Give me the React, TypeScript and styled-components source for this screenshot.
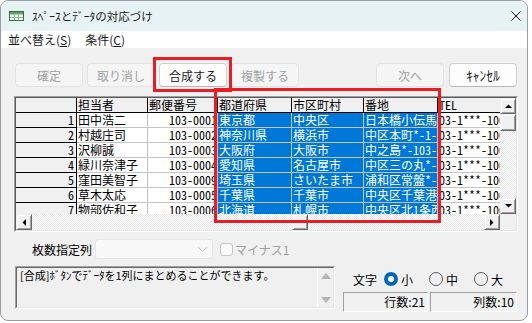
import React from "react";
import styled, { createGlobalStyle } from "styled-components";

const UI_FONT = `"Noto Sans CJK JP", "Noto Sans", sans-serif`;
const GRID_FONT = `"Noto Sans Mono CJK JP", "Noto Sans CJK JP", monospace`;

const GlobalStyle = createGlobalStyle`
  html, body {
    margin: 0;
    padding: 0;
    background: #ffffff;
  }
  body {
    font-family: ${UI_FONT};
  }
`;

const Window = styled.div`
  position: relative;
  width: 528px;
  height: 321px;
  box-sizing: border-box;
  border: 1px solid #9a9fa3;
  border-radius: 8px;
  overflow: hidden;
  background: #f0f0f0;
  display: flex;
  flex-direction: column;
  font-family: ${UI_FONT};
  color: #000;
`;

const TitleBar = styled.div`
  height: 30px;
  flex: none;
  display: flex;
  align-items: center;
  padding: 0 6px 0 8px;
  background: #e6f2f4;
`;

const TitleText = styled.span`
  margin-left: 8px;
  font-size: 11.5px;
  color: #1a1a1a;
`;

const CloseBox = styled.div`
  margin-left: auto;
  width: 10px;
  height: 10px;
  display: flex;
`;

const MenuBar = styled.div`
  height: 17px;
  flex: none;
  display: flex;
  align-items: center;
  gap: 14px;
  padding-left: 7px;
  background: #ffffff;
  font-size: 12px;
  color: #1a1a1a;

  u {
    text-underline-offset: 1px;
  }
`;

const MenuItem = styled.span`
  line-height: 17px;
`;

const Body = styled.div`
  flex: 1;
  display: flex;
  flex-direction: column;
  padding: 15px 10px 0 13px;
`;

const ButtonRow = styled.div`
  display: flex;
  gap: 4px;
  height: 24px;
  padding-left: 1px;
`;

const Btn = styled.button<{ $push?: number; $kana?: boolean }>`
  width: 68px;
  height: 24px;
  box-sizing: border-box;
  margin: 0 0 0 ${(p) => p.$push ?? 0}px;
  padding: 0;
  border: 1px solid #d0d0d0;
  border-bottom-color: #b8b8b8;
  border-radius: 4px;
  background: #fdfdfd;
  font-family: ${UI_FONT};
  font-size: ${(p) => (p.$kana ? 13.5 : 12)}px;
  color: #1a1a1a;

  &:disabled {
    background: #f5f5f5;
    border-color: #e3e3e3;
    color: #a2a2a2;
  }
`;

const Spacer = styled.div`
  flex: 1;
`;

const Highlight = styled.div`
  position: relative;
  display: flex;

  &::after {
    content: "";
    position: absolute;
    left: -6px;
    top: -6px;
    right: -5px;
    bottom: -5px;
    border: 3px solid #ea1c24;
    pointer-events: none;
  }
`;

const GridFrame = styled.div`
  position: relative;
  margin-top: 9px;
  width: 504px;
  height: 136px;
  box-sizing: border-box;
  border: 1px solid;
  border-color: #a0a0a0 #ffffff #ffffff #a0a0a0;
`;

const GridInner = styled.div`
  height: 100%;
  box-sizing: border-box;
  border: 1px solid;
  border-color: #5a5a5a #e3e3e3 #e3e3e3 #5a5a5a;
  display: grid;
  grid-template-columns: 1fr 16px;
  grid-template-rows: 1fr 16px;
`;

const ColumnMark = styled.div`
  position: absolute;
  left: 199px;
  top: -9px;
  width: 227px;
  height: 135px;
  box-sizing: border-box;
  border: 3px solid #ea1c24;
  pointer-events: none;
`;

const Sheet = styled.div`
  overflow: hidden;
  background: #ffffff;
  display: grid;
  grid-template-columns: 61px 71px 70px 74px 72px 74px 90px;
  grid-auto-rows: 15px;
  align-content: start;
  font-family: ${GRID_FONT};
  font-size: 12px;
  line-height: 14px;
`;

const BaseCell = styled.div`
  box-sizing: border-box;
  white-space: nowrap;
  overflow: hidden;
  border-right: 1px solid #c4c4c4;
  border-bottom: 1px solid #c4c4c4;
  padding: 0 1px;
`;

const HeadCell = styled(BaseCell)`
  background: #f0f0f0;
  border-color: #000;
`;

const RowHeadCell = styled(BaseCell)`
  background: #f0f0f0;
  border-color: #000;
  text-align: right;
  padding-right: 2px;
`;

const DataCell = styled(BaseCell)<{ $selected?: boolean; $right?: boolean }>`
  background: ${(p) => (p.$selected ? "#0078d7" : "#ffffff")};
  color: ${(p) => (p.$selected ? "#ffffff" : "#000000")};
  text-align: ${(p) => (p.$right ? "right" : "left")};
  padding: ${(p) => (p.$right ? "0" : "0 1px")};
`;

const VScroll = styled.div`
  display: flex;
  flex-direction: column;
`;

const HScroll = styled.div`
  display: flex;
`;

const ScrollCorner = styled.div`
  background: #f0f0f0;
`;

const ScrollBtn = styled.div`
  flex: none;
  width: 16px;
  height: 16px;
  box-sizing: border-box;
  background: #f0f0f0;
  border: 1px solid;
  border-color: #f0f0f0 #696969 #696969 #f0f0f0;
  box-shadow: inset 1px 1px #ffffff, inset -1px -1px #a0a0a0;
  display: flex;
  align-items: center;
  justify-content: center;
`;

const Thumb = styled(ScrollBtn)<{ $offset: number; $vertical?: boolean }>`
  margin: ${(p) => (p.$vertical ? `${p.$offset}px 0 0 0` : `0 0 0 ${p.$offset}px`)};
  height: ${(p) => (p.$vertical ? 17 : 16)}px;
`;

const Track = styled.div<{ $vertical?: boolean }>`
  flex: 1;
  display: flex;
  flex-direction: ${(p) => (p.$vertical ? "column" : "row")};
  background: repeating-conic-gradient(#ffffff 0 25%, #e6e6e6 0 50%) 0 0 / 2px 2px;
`;

const OptionsRow = styled.div`
  display: flex;
  align-items: center;
  margin-top: 7px;
  height: 20px;
  padding-left: 18px;
  font-size: 12px;
`;

const SelectBox = styled.div`
  margin-left: 3px;
  width: 118px;
  height: 20px;
  box-sizing: border-box;
  border: 1px solid #e6e6e6;
  border-radius: 3px;
  background: #f8f8f8;
  display: flex;
  align-items: center;
  justify-content: flex-end;
  padding-right: 5px;
`;

const CheckBox = styled.div`
  margin-left: 7px;
  width: 13px;
  height: 13px;
  box-sizing: border-box;
  border: 1px solid #c6c6c6;
  border-radius: 3px;
  background: #fafafa;
`;

const CheckLabel = styled.span`
  margin-left: 2px;
  color: #a0a0a0;
`;

const BottomRow = styled.div`
  display: flex;
  margin-top: 7px;
`;

const MessageBox = styled.div`
  margin-left: 1px;
  width: 320px;
  height: 43px;
  box-sizing: border-box;
  border: 1px solid;
  border-color: #a0a0a0 #ffffff #ffffff #a0a0a0;
`;

const MessageInner = styled.div`
  height: 100%;
  box-sizing: border-box;
  border: 1px solid;
  border-color: #696969 #e3e3e3 #e3e3e3 #696969;
  display: flex;
`;

const MessageText = styled.div`
  flex: 1;
  padding: 1px 3px 0;
  font-size: 11px;
  line-height: 13px;
  white-space: nowrap;
  overflow: hidden;
`;

const MessageScroll = styled.div`
  width: 15px;
  border-left: 1px solid #ffffff;
  display: flex;
  flex-direction: column;
  justify-content: space-between;
  align-items: center;
  padding: 5px 0 4px;
`;

const RightPanel = styled.div`
  margin-left: 8px;
  flex: 1;
  display: flex;
  flex-direction: column;
  font-size: 12px;
`;

const RadioRow = styled.div`
  display: flex;
  align-items: center;
  height: 16px;
  margin-top: 5px;
  padding-left: 10px;
`;

const RadioItem = styled.div<{ $first?: boolean }>`
  display: flex;
  align-items: center;
  gap: 3px;
  margin-left: ${(p) => (p.$first ? 7 : 16)}px;
`;

const RadioCircle = styled.div<{ $checked?: boolean }>`
  width: 14px;
  height: 14px;
  box-sizing: border-box;
  border-radius: 50%;
  border: ${(p) => (p.$checked ? "4px solid #0067c0" : "1px solid #5c5c5c")};
  background: ${(p) => (p.$checked ? "#ffffff" : "transparent")};
`;

const StatusRow = styled.div`
  display: flex;
  gap: 2px;
  margin-top: 5px;
`;

const StatusBox = styled.div<{ $w: number }>`
  width: ${(p) => p.$w}px;
  height: 20px;
  box-sizing: border-box;
  border: 1px solid;
  border-color: #a0a0a0 #ffffff #ffffff #a0a0a0;
  text-align: right;
  padding-right: 2px;
  line-height: 18px;
`;

const AppIcon = () => (
  <svg width="15" height="10" viewBox="0 0 15 10">
    <rect x="0.5" y="0.5" width="14" height="9" fill="#ffffff" stroke="#2f6f3a" />
    <rect x="1" y="1" width="13" height="2.5" fill="#57a55f" />
    <path d="M1 6.5H14M5.5 3.5V9.5M9.5 3.5V9.5" stroke="#7fbf86" strokeWidth="1" />
  </svg>
);

const CloseGlyph = () => (
  <svg width="10" height="10" viewBox="0 0 10 10">
    <path d="M0.5 0.5L9.5 9.5M9.5 0.5L0.5 9.5" stroke="#1a1a1a" strokeWidth="1" />
  </svg>
);

type Dir = "up" | "down" | "left" | "right";
const arrowPoints: Record<Dir, string> = {
  up: "0,4 7,4 3.5,0.5",
  down: "0,0 7,0 3.5,3.5",
  left: "4,0 4,7 0.5,3.5",
  right: "0,0 0,7 3.5,3.5",
};

const Arrow = ({ dir, color = "#000" }: { dir: Dir; color?: string }) => {
  const vertical = dir === "up" || dir === "down";
  return (
    <svg width={vertical ? 7 : 4} height={vertical ? 4 : 7}>
      <polygon points={arrowPoints[dir]} fill={color} />
    </svg>
  );
};

const SoftArrow = ({ up }: { up?: boolean }) => (
  <svg width="10" height="6" viewBox="0 0 10 6">
    <polygon points={up ? "0,6 10,6 5,0" : "0,0 10,0 5,6"} fill="#b4b4b4" />
  </svg>
);

const Chevron = () => (
  <svg width="9" height="5" viewBox="0 0 9 5">
    <path d="M0.5 0.5L4.5 4.5L8.5 0.5" fill="none" stroke="#b8b8b8" strokeWidth="1" />
  </svg>
);

const columns = ["担当者", "郵便番号", "都道府県", "市区町村", "番地", "TEL"];

const rows = [
  ["田中浩二", "103-0001", "東京都", "中央区", "日本橋小伝馬町*-*", "03-1***-1001"],
  ["村越庄司", "103-0002", "神奈川県", "横浜市", "中区本町*-1-*", "03-1***-1002"],
  ["沢柳誠", "103-0003", "大阪府", "大阪市", "中之島*-103-*", "03-1***-1003"],
  ["緑川奈津子", "103-0004", "愛知県", "名古屋市", "中区三の丸*-*", "03-1***-1004"],
  ["窪田美智子", "103-0009", "埼玉県", "さいたま市", "浦和区常盤*-*", "03-1***-1009"],
  ["草木太応", "103-0005", "千葉県", "千葉市", "中央区千葉港*", "03-1***-1005"],
  ["物部佐和子", "103-0006", "北海道", "札幌市", "中央区北1条西", "03-1***-1006"],
];

const selectedCols = [2, 3, 4];

export default function App() {
  return (
    <>
      <GlobalStyle />
      <Window>
        <TitleBar>
          <AppIcon />
          <TitleText>ｽﾍﾟｰｽとﾃﾞｰﾀの対応づけ</TitleText>
          <CloseBox>
            <CloseGlyph />
          </CloseBox>
        </TitleBar>
        <MenuBar>
          <MenuItem>
            並べ替え(<u>S</u>)
          </MenuItem>
          <MenuItem>
            条件(<u>C</u>)
          </MenuItem>
        </MenuBar>
        <Body>
          <ButtonRow>
            <Btn disabled>確定</Btn>
            <Btn disabled>取り消し</Btn>
            <Highlight>
              <Btn>合成する</Btn>
            </Highlight>
            <Btn disabled>複製する</Btn>
            <Spacer />
            <Btn disabled>次へ</Btn>
            <Btn $push={1} $kana>
              ｷｬﾝｾﾙ
            </Btn>
          </ButtonRow>

          <GridFrame>
            <GridInner>
              <Sheet>
                <HeadCell />
                {columns.map((c) => (
                  <HeadCell key={c}>{c}</HeadCell>
                ))}
                {rows.map((r, i) => (
                  <React.Fragment key={i}>
                    <RowHeadCell>{i + 1}</RowHeadCell>
                    {r.map((v, j) => (
                      <DataCell key={j} $selected={selectedCols.includes(j)} $right={j === 1}>
                        {v}
                      </DataCell>
                    ))}
                  </React.Fragment>
                ))}
              </Sheet>
              <VScroll>
                <ScrollBtn>
                  <Arrow dir="up" />
                </ScrollBtn>
                <Track $vertical>
                  <Thumb $offset={0} $vertical />
                </Track>
                <ScrollBtn>
                  <Arrow dir="down" />
                </ScrollBtn>
              </VScroll>
              <HScroll>
                <ScrollBtn>
                  <Arrow dir="left" />
                </ScrollBtn>
                <Track>
                  <Thumb $offset={260} />
                </Track>
                <ScrollBtn>
                  <Arrow dir="right" />
                </ScrollBtn>
              </HScroll>
              <ScrollCorner />
            </GridInner>
            <ColumnMark />
          </GridFrame>

          <OptionsRow>
            <span>枚数指定列</span>
            <SelectBox>
              <Chevron />
            </SelectBox>
            <CheckBox />
            <CheckLabel>マイナス1</CheckLabel>
          </OptionsRow>

          <BottomRow>
            <MessageBox>
              <MessageInner>
                <MessageText>[合成]ﾎﾞﾀﾝでﾃﾞｰﾀを1列にまとめることができます。</MessageText>
                <MessageScroll>
                  <SoftArrow up />
                  <SoftArrow />
                </MessageScroll>
              </MessageInner>
            </MessageBox>
            <RightPanel>
              <RadioRow>
                <span>文字</span>
                <RadioItem $first>
                  <RadioCircle $checked />
                  <span>小</span>
                </RadioItem>
                <RadioItem>
                  <RadioCircle />
                  <span>中</span>
                </RadioItem>
                <RadioItem>
                  <RadioCircle />
                  <span>大</span>
                </RadioItem>
              </RadioRow>
              <StatusRow>
                <StatusBox $w={85}>行数:21</StatusBox>
                <StatusBox $w={87}>列数:10</StatusBox>
              </StatusRow>
            </RightPanel>
          </BottomRow>
        </Body>
      </Window>
    </>
  );
}
